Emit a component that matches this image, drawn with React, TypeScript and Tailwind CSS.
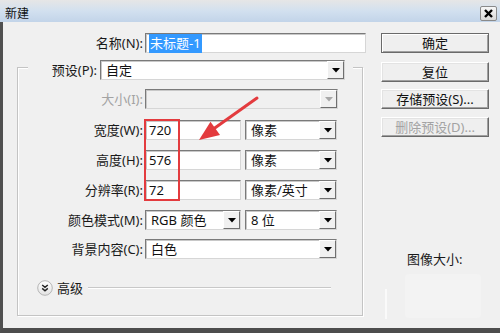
import React from "react";

const FONT = "font-['Noto_Sans','Noto_Sans_CJK_SC',sans-serif]";

function Arrow({ disabled }: { disabled?: boolean }) {
  return (
    <div className="w-[17px] h-full flex items-center justify-center bg-[#f0f0f0] border border-t-white border-l-white border-r-[#6f6f6f] border-b-[#6f6f6f]">
      <svg width="8" height="5" viewBox="0 0 8 5">
        <polygon points="0,0 8,0 4,4.5" fill={disabled ? "#a8a8a8" : "#000"} />
      </svg>
    </div>
  );
}

function Select({ cls, text, disabled }: { cls: string; text: string; disabled?: boolean }) {
  return (
    <div
      className={`h-[20px] flex border border-t-[#7a7a7a] border-l-[#7a7a7a] border-r-[#d6d6d6] border-b-[#d6d6d6] shadow-[inset_1px_1px_0_#c8c8c8] ${
        disabled ? "bg-[#f0f0f0]" : "bg-white"
      } ${cls}`}
    >
      <div className="flex-1 flex items-center pl-[5px] text-[13px] leading-none text-[#111] whitespace-nowrap">{text}</div>
      <Arrow disabled={disabled} />
    </div>
  );
}

function Field({ cls, children }: { cls: string; children?: React.ReactNode }) {
  return (
    <div
      className={`h-[20px] flex items-center bg-white border border-t-[#7a7a7a] border-l-[#7a7a7a] border-r-[#d6d6d6] border-b-[#d6d6d6] shadow-[inset_1px_1px_0_#c8c8c8] pl-[3px] text-[13px] leading-none text-[#111] ${cls}`}
    >
      {children}
    </div>
  );
}

function Label({ cls, children, disabled }: { cls: string; children: React.ReactNode; disabled?: boolean }) {
  return (
    <div
      className={`flex items-center justify-end whitespace-nowrap text-[13px] leading-none ${
        disabled ? "text-[#a3a3a3]" : "text-[#1a1a1a]"
      } ${cls}`}
    >
      {children}
    </div>
  );
}

function Button({ children, primary, disabled }: { children: React.ReactNode; primary?: boolean; disabled?: boolean }) {
  return (
    <div
      className={`h-[20px] w-[108px] flex items-center justify-center text-[13px] leading-none bg-[#efefef] ${
        primary
          ? "border border-[#6a6a6a] shadow-[inset_1px_1px_0_#fff,inset_-1px_-1px_0_#a0a0a0]"
          : "border border-t-[#ffffff] border-l-[#ffffff] border-r-[#6a6a6a] border-b-[#6a6a6a] shadow-[inset_-1px_-1px_0_#a0a0a0,inset_1px_1px_0_#e3e3e3]"
      } ${disabled ? "text-[#a3a3a3]" : "text-[#111]"}`}
    >
      {children}
    </div>
  );
}

export default function App() {
  return (
    <div className={`relative w-[500px] h-[333px] overflow-hidden bg-[#f0f0f0] flex flex-col ${FONT}`}>
      {/* title bar */}
      <div className="h-[22px] flex items-center justify-between pt-[5px] pl-[5px] pr-[3px] bg-linear-to-b from-[#e6e6e6] via-[#d2e0ef] to-[#c2d4e9]">
        <div className="text-[12px] leading-none text-[#111]">新建</div>
        <div className="w-[17px] h-[15px] flex items-center justify-center rounded-[2px] border border-[#8a8a8a] bg-linear-to-b from-[#f7f7f7] to-[#d9d9d9]">
          <svg width="9" height="9" viewBox="0 0 9 9">
            <path d="M1 1 L8 8 M8 1 L1 8" stroke="#000" strokeWidth="2.4" />
          </svg>
        </div>
      </div>

      {/* body */}
      <div className="flex-1 flex border-l-[3px] border-l-[#505050] border-b-[5px] border-b-[#4d4d4d]">
        {/* left column */}
        <div className="w-[375px] flex flex-col pt-[11px]">
          <div className="flex h-[20px]">
            <Label cls="w-[140px]">名称(N):</Label>
            <Field cls="ml-[2px] w-[221px]">
              <span className="bg-[#3399ff] text-white px-[1px] py-[3px]">未标题-1</span>
            </Field>
          </div>

          <div className="ml-[14px] mt-[14px] w-[346px] h-[249px] flex flex-col border border-[#c4c4c4] shadow-[inset_1px_1px_0_#fff,1px_1px_0_#fff]">
            {/* preset row overlapping top border */}
            <div className="-mt-[8px] flex h-[20px] pl-[10px]">
              <div className="flex bg-[#f0f0f0] pl-[24px] pr-[8px]">
                <Label cls="w-[45px]">预设(P):</Label>
                <Select cls="ml-[3px] w-[245px]" text="自定" />
              </div>
            </div>

            <div className="mt-[9px] flex h-[20px]">
              <Label cls="w-[125px]" disabled>
                大小(I):
              </Label>
              <Select cls="ml-[2px] w-[193px]" text="" disabled />
            </div>

            <div className="mt-[11px] flex h-[20px]">
              <Label cls="w-[125px]">宽度(W):</Label>
              <Field cls="ml-[2px] w-[96px]">720</Field>
              <Select cls="ml-[4px] w-[92px]" text="像素" />
            </div>

            <div className="mt-[10px] flex h-[20px]">
              <Label cls="w-[125px]">高度(H):</Label>
              <Field cls="ml-[2px] w-[96px]">576</Field>
              <Select cls="ml-[4px] w-[92px]" text="像素" />
            </div>

            <div className="mt-[10px] flex h-[20px]">
              <Label cls="w-[125px]">分辨率(R):</Label>
              <Field cls="ml-[2px] w-[96px]">72</Field>
              <Select cls="ml-[4px] w-[92px]" text="像素/英寸" />
            </div>

            <div className="mt-[10px] flex h-[20px]">
              <Label cls="w-[125px]">颜色模式(M):</Label>
              <Select cls="ml-[2px] w-[96px]" text="RGB 颜色" />
              <Select cls="ml-[4px] w-[92px]" text="8 位" />
            </div>

            <div className="mt-[9px] flex h-[20px]">
              <Label cls="w-[125px]">背景内容(C):</Label>
              <Select cls="ml-[2px] w-[192px]" text="白色" />
            </div>

            <div className="mt-[21px] flex items-center h-[16px] pl-[19px]">
              <svg width="16" height="16" viewBox="0 0 16 16">
                <defs>
                  <linearGradient id="adv" x1="0" y1="0" x2="0" y2="1">
                    <stop offset="0" stopColor="#ffffff" />
                    <stop offset="1" stopColor="#e2e2e2" />
                  </linearGradient>
                </defs>
                <circle cx="8" cy="8" r="7.3" fill="url(#adv)" stroke="#b5b5b5" strokeWidth="1" />
                <path d="M5.2 5 L8 7.4 L10.8 5 M5.2 8.4 L8 10.8 L10.8 8.4" fill="none" stroke="#222" strokeWidth="1.4" />
              </svg>
              <div className="ml-[4px] text-[13px] leading-none text-[#1a1a1a]">高级</div>
              <div className="flex-1 ml-[5px] mr-[31px] h-[2px] border-t border-t-[#c8c8c8] border-b border-b-white" />
            </div>
          </div>
        </div>

        {/* right column */}
        <div className="flex flex-col pt-[11px] ml-[3px]">
          <Button primary>确定</Button>
          <div className="mt-[9px]">
            <Button>复位</Button>
          </div>
          <div className="mt-[7px]">
            <Button>存储预设(S)...</Button>
          </div>
          <div className="mt-[8px]">
            <Button disabled>删除预设(D)...</Button>
          </div>
          <div className="mt-[116px] ml-[26px] text-[13px] leading-none text-[#1a1a1a]">图像大小:</div>
          <div className="mt-[8px] flex">
            <div className="mt-[15px] ml-[4px] w-[2px] h-[30px] bg-[#fafafa]" />
            <div className="ml-[18px] w-[76px] h-[44px] bg-[#f3f3f3] rounded-[4px]" />
          </div>
        </div>
      </div>

      {/* red annotation overlay */}
      <svg className="absolute left-0 top-0 pointer-events-none" width="500" height="333" viewBox="0 0 500 333">
        <rect x="145" y="120" width="34" height="80" fill="none" stroke="#e33b3e" strokeWidth="2" />
        <line x1="257" y1="98" x2="212" y2="130" stroke="#e33b3e" strokeWidth="3" strokeLinecap="round" />
        <polygon points="199,140 220,135 210.5,121.8" fill="#e33b3e" />
      </svg>
    </div>
  );
}
